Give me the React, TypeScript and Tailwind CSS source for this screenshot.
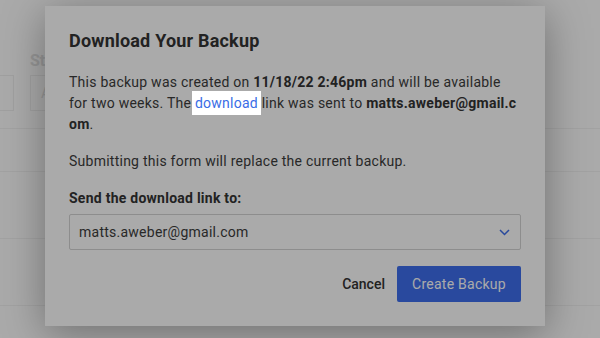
export default function App() {
  return (
    <div className="relative h-[338px] w-[600px] overflow-hidden bg-white font-['Roboto',sans-serif]">
      {/* page behind the dialog */}
      <div className="pt-[51px]">
        <h2 className="pl-[30px] text-[16px] font-bold leading-5 text-[#e2e2e2]">Status</h2>
        <div className="mt-[4px] flex gap-4 pl-0">
          <div className="h-[36px] w-[14px] border border-l-0 border-[#f0f0f0]" />
          <div className="flex h-[36px] w-[200px] items-center border border-[#f0f0f0] px-[10px] text-[14px] text-[#e2e2e2]">
            All backups
          </div>
        </div>
        <div className="mt-[17px] border-t border-[#f3f3f3]" />
        <div className="h-[43px] border-b border-[#f3f3f3]" />
        <div className="h-[67px] border-b border-[#f3f3f3]" />
        <div className="h-[67px] border-b border-[#f3f3f3]" />
      </div>

      {/* dialog */}
      <div className="absolute left-[45px] top-[6px] w-[500px] bg-white px-6 pb-6 pt-6 tracking-[0.25px] shadow-[0_8px_40px_rgba(0,0,0,0.35)]">
        <h1 className="text-[18px] font-bold leading-[22px] tracking-[0.2px] text-[#333]">Download Your Backup</h1>
        <p className="mt-5 text-[14px] leading-[21px] text-[#3d3d3d]">
          This backup was created on <b className="font-bold text-[#333]">11/18/22 2:46pm</b> and will be available
          for two weeks. The{" "}
          <a href="#" className="relative z-20 -mx-[3px] bg-white px-[3px] py-[4px] text-[#3a6de6]">
            download
          </a>{" "}
          link was sent to <b className="break-all font-bold text-[#333]">matts.aweber@gmail.com</b>.
        </p>
        <p className="mt-4 text-[14px] leading-[21px] text-[#3d3d3d]">
          Submitting this form will replace the current backup.
        </p>
        <label className="mt-4 block text-[14px] font-bold leading-[21px] text-[#333]">
          Send the download link to:
        </label>
        <div className="mt-[5px] flex h-[36px] items-center justify-between rounded-[2px] border border-[#d4d4d4] pl-[9px] pr-[10px]">
          <span className="text-[14px] text-[#3d3d3d]">matts.aweber@gmail.com</span>
          <svg width="11" height="7" viewBox="0 0 11 7" fill="none">
            <path d="M1 1l4.5 4.5L10 1" stroke="#3e6eeb" strokeWidth="1.5" />
          </svg>
        </div>
        <div className="mt-4 flex items-center justify-end gap-3">
          <button type="button" className="text-[14px] font-medium tracking-normal text-[#333]">
            Cancel
          </button>
          <button
            type="button"
            className="h-[36px] w-[124px] rounded-[2px] bg-[#3e6eed] text-[14px] text-white"
          >
            Create Backup
          </button>
        </div>
      </div>

      {/* dimming overlay; the link above sits over it */}
      <div className="absolute inset-0 z-10 bg-black/[0.333]" />
    </div>
  );
}
